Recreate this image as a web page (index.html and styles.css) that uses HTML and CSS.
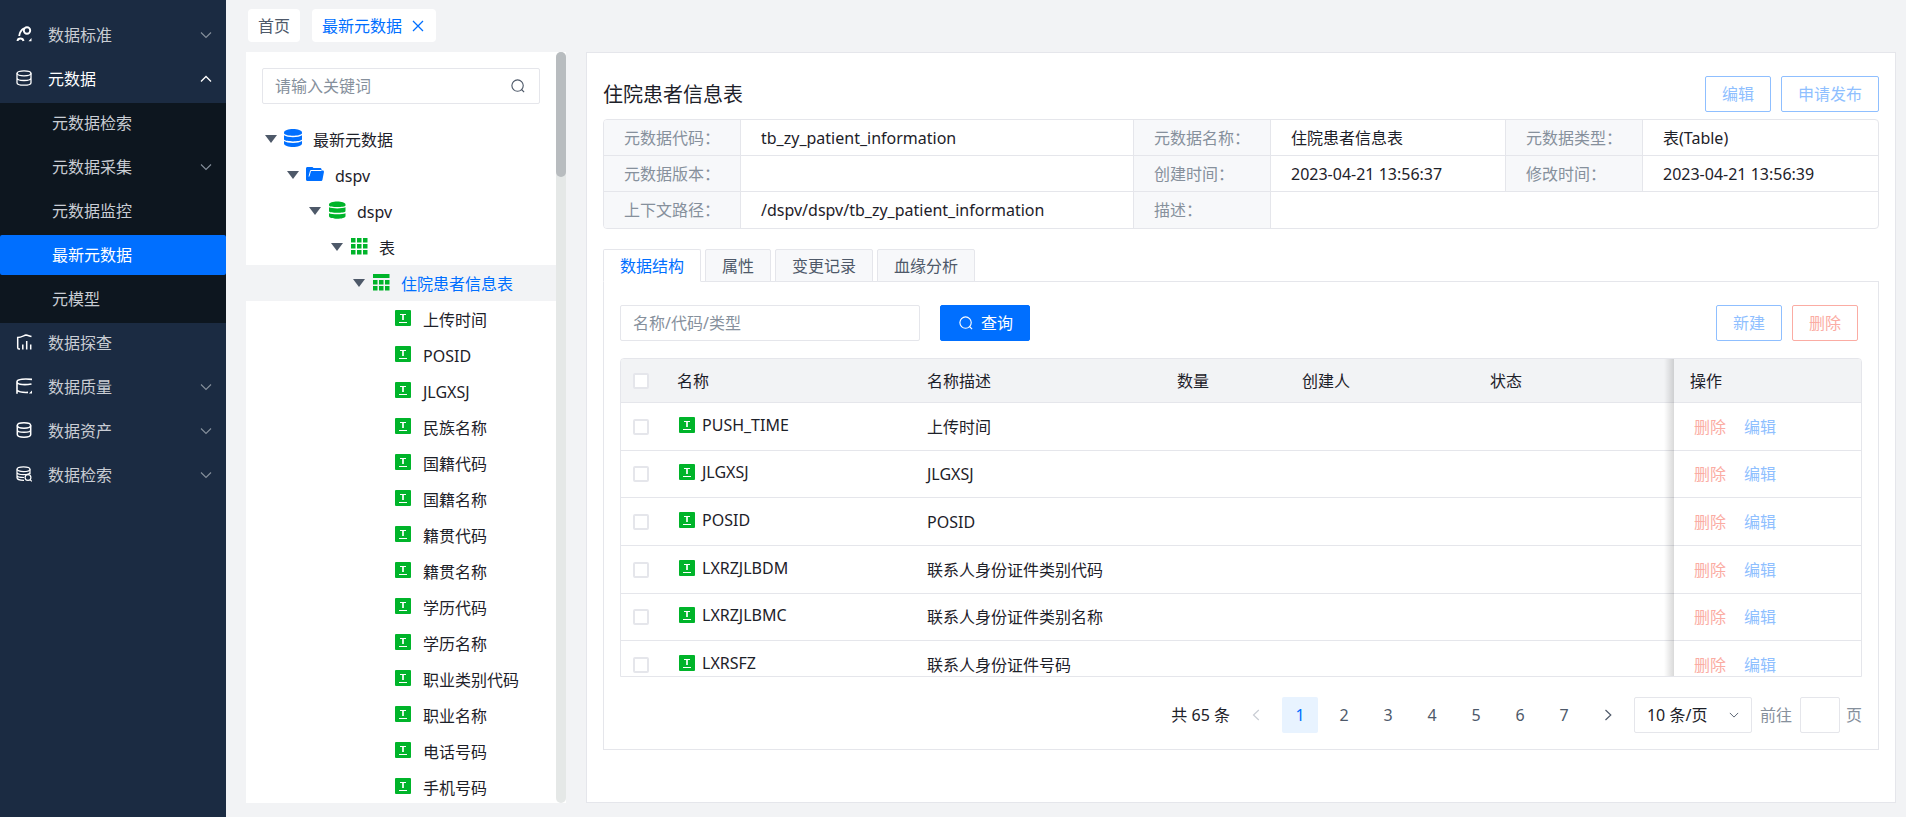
FILE: index.html
```html
<!DOCTYPE html>
<html lang="zh-CN">
<head>
<meta charset="utf-8">
<title>最新元数据</title>
<link rel="stylesheet" href="styles.css">
</head>
<body>
<svg class="sprite" aria-hidden="true">
  <symbol id="i-down" viewBox="0 0 12 12"><path d="M1 3.5l5 5 5-5" fill="none" stroke="currentColor" stroke-width="1.1"/></symbol>
  <symbol id="i-up" viewBox="0 0 12 12"><path d="M1 8.5l5-5 5 5" fill="none" stroke="currentColor" stroke-width="1.3"/></symbol>
  <symbol id="i-left" viewBox="0 0 12 12"><path d="M8.8 1L3.5 6l5.300 5" fill="none" stroke="currentColor" stroke-width="1.200"/></symbol>
  <symbol id="i-right" viewBox="0 0 12 12"><path d="M3.500 1l5.300 5-5.300 5" fill="none" stroke="currentColor" stroke-width="1.200"/></symbol>
  <symbol id="i-close" viewBox="0 0 12 12"><path d="M1 1l10 10M11 1L1 11" fill="none" stroke="currentColor" stroke-width="1.300"/></symbol>
  <symbol id="i-search" viewBox="0 0 16 16"><circle cx="7.500" cy="7.500" r="6.500" fill="none" stroke="currentColor" stroke-width="1.300"/><path d="M12 12l3 3" stroke="currentColor" stroke-width="1.300"/></symbol>
  <symbol id="i-caret" viewBox="0 0 12 8"><path d="M0 0h12L6 8z" fill="currentColor"/></symbol>
  <symbol id="i-standard" viewBox="0 0 16 16"><g fill="none" stroke="currentColor" stroke-width="1.900"><circle cx="11" cy="4.500" r="3.200"/><path d="M8 2.200C5 4 3.600 6.500 3.200 10"/><path d="M1.500 15c.3-3.400 5.500-3.400 6 0"/></g><path d="M15.500 12v3.200h-3z" fill="currentColor"/></symbol>
  <symbol id="i-db" viewBox="0 0 16 16"><g fill="none" stroke="currentColor" stroke-width="1.300"><ellipse cx="8" cy="3.300" rx="7" ry="2.500"/><path d="M1 3.300v9.400c0 1.400 3.100 2.500 7 2.500s7-1.100 7-2.500V3.300M1 8c0 1.400 3.100 2.500 7 2.500S15 9.400 15 8"/></g></symbol>
  <symbol id="i-explore" viewBox="0 0 16 16"><g fill="none" stroke="currentColor" stroke-width="1.500"><path d="M4 15H3C2 15 1.700 14.500 1.700 13.500V3.500C5 3.500 7.500 1.800 10 1c2 .4 3.500 1.200 5.500 1.600"/><path d="M6.800 15.500v-5M10.700 15.500V7M14.700 15.500v-5"/></g></symbol>
  <symbol id="i-quality" viewBox="0 0 16 16"><g fill="none" stroke="currentColor" stroke-width="1.600"><path d="M16 1.400C9 .6 1.200 1 1 3.600V15.800M1 4.200c1 2.600 8 3 14.500 1.800M1 12.200c1.500 1.600 6 2.400 11 2.200"/></g><path d="M16 12.500v3h-3z" fill="currentColor"/></symbol>
  <symbol id="i-asset" viewBox="0 0 16 16"><g fill="none" stroke="currentColor" stroke-width="1.500"><ellipse cx="8" cy="3.500" rx="6.700" ry="2.700"/><path d="M1.300 3.500v9c0 1.500 2.900 2.700 6.700 2.700s6.700-1.200 6.700-2.700v-9M1.300 8c0 1.300 2.900 2.300 6.700 2.300s6.700-1 6.700-2.300"/></g></symbol>
  <symbol id="i-retrieve" viewBox="0 0 16 16"><g fill="none" stroke="currentColor" stroke-width="1.200"><ellipse cx="7.500" cy="3.200" rx="6.500" ry="2.400"/><path d="M1 3.200v8.600c0 1.300 3 2.600 7 2.600M14 3.200v5M1 6.200c0 1.300 2.900 2.400 6.500 2.400S14 7.500 14 6.200M1 9.200c0 1.200 3 2.300 7 2.300"/><circle cx="12" cy="11.500" r="2.900"/><path d="M14 13.600l1.800 1.800"/></g></symbol>
  <symbol id="i-store" viewBox="0 0 18 18"><path d="M0 3.800C0-1.200 18-1.200 18 3.800v.8c-2 3-16 3-18 0z" fill="currentColor"/><path d="M0 6.200c3 2.600 15 2.600 18 0v4.300c-2 2.500-16 2.500-18 0zM0 12c3 2.600 15 2.600 18 0v2.500c0 4.600-18 4.600-18 0z" fill="currentColor"/></symbol>
  <symbol id="i-folder" viewBox="0 0 18 18"><path d="M1.500 2H6.500l1 1H14c1 0 1.600.6 1.600 1.500V5.500h1c1 0 1.500.7 1.300 1.700l-1.400 7.300c-.2 1-.8 1.500-1.700 1.500H1.500C.6 16 0 15.400 0 14.500v-11C0 2.600.6 2 1.500 2z" fill="currentColor"/><path d="M3 11.500l1.600-6H15.500" fill="none" stroke="#fff" stroke-width="1"/></symbol>
  <symbol id="i-schema" viewBox="0 0 18 18"><path d="M1 3.500C1-.4 17.500-.4 17.500 3.500v1C17.500 6.500 1 6.500 1 4.500zM1 6.300c3 1.500 13.500 1.500 16.500 0v4c0 2-16.500 2-16.500 0zM1 12.200c3 1.500 13.500 1.500 16.500 0V15c0 3.700-16.500 3.700-16.500 0z" fill="currentColor"/></symbol>
  <symbol id="i-grid" viewBox="0 0 18 18"><path d="M1 1h4.500v4.500H1zM7 1h4.500v4.500H7zM13 1h4.500v4.500H13zM1 7h4.500v4.500H1zM7 7h4.500v4.500H7zM13 7h4.500v4.500H13zM1 13h4.500v4.500H1zM7 13h4.500v4.500H7zM13 13h4.500v4.500H13z" fill="currentColor"/></symbol>
  <symbol id="i-table" viewBox="0 0 18 18"><path d="M1 1h16.500v4H1zM1 7h4.500v4.500H1zM7 7h4.500v4.500H7zM13 7h4.500v4.500H13zM1 13h4.500v4.500H1zM7 13h4.500v4.500H7zM13 13h4.500v4.500H13z" fill="currentColor"/></symbol>
  <symbol id="i-field" viewBox="0 0 18 18"><rect x="1" y="1" width="16" height="16" rx="1" fill="currentColor"/><path d="M6 5.500h6M5 13.500h8" stroke="#fff" stroke-width="1.200"/><path d="M9 5v6" stroke="#fff" stroke-width="1.700"/></symbol>
</svg>

<div class="app">
  <nav class="sidebar">
    <a class="menu-item" href="#"><svg class="menu-icon"><use href="#i-standard"/></svg><span class="menu-label">数据标准</span><svg class="chevron"><use href="#i-down"/></svg></a>
    <a class="menu-item open" href="#"><svg class="menu-icon"><use href="#i-db"/></svg><span class="menu-label">元数据</span><svg class="chevron"><use href="#i-up"/></svg></a>
    <div class="submenu">
      <a class="menu-item" href="#"><span class="menu-label">元数据检索</span></a>
      <a class="menu-item" href="#"><span class="menu-label">元数据采集</span><svg class="chevron"><use href="#i-down"/></svg></a>
      <a class="menu-item" href="#"><span class="menu-label">元数据监控</span></a>
      <a class="menu-item current" href="#"><span class="menu-label">最新元数据</span></a>
      <a class="menu-item" href="#"><span class="menu-label">元模型</span></a>
    </div>
    <a class="menu-item" href="#"><svg class="menu-icon"><use href="#i-explore"/></svg><span class="menu-label">数据探查</span></a>
    <a class="menu-item" href="#"><svg class="menu-icon"><use href="#i-quality"/></svg><span class="menu-label">数据质量</span><svg class="chevron"><use href="#i-down"/></svg></a>
    <a class="menu-item" href="#"><svg class="menu-icon"><use href="#i-asset"/></svg><span class="menu-label">数据资产</span><svg class="chevron"><use href="#i-down"/></svg></a>
    <a class="menu-item" href="#"><svg class="menu-icon"><use href="#i-retrieve"/></svg><span class="menu-label">数据检索</span><svg class="chevron"><use href="#i-down"/></svg></a>
  </nav>

  <div class="main">
    <div class="page-tabs">
      <a class="page-tab" href="#">首页</a>
      <div class="page-tab active"><a class="page-link" href="#">最新元数据</a><button class="close" type="button" aria-label="关闭"><svg><use href="#i-close"/></svg></button></div>
    </div>

    <div class="panels">
      <aside class="tree-panel">
        <div class="tree-body">
          <div class="tree-search"><input type="text" placeholder="请输入关键词" aria-label="请输入关键词"><svg><use href="#i-search"/></svg></div>
          <ul class="tree">
            <li class="node"><svg class="caret"><use href="#i-caret"/></svg><svg class="node-icon blue"><use href="#i-store"/></svg>最新元数据</li>
            <li class="node l1"><svg class="caret"><use href="#i-caret"/></svg><svg class="node-icon blue"><use href="#i-folder"/></svg>dspv</li>
            <li class="node l2"><svg class="caret"><use href="#i-caret"/></svg><svg class="node-icon"><use href="#i-schema"/></svg>dspv</li>
            <li class="node l3"><svg class="caret"><use href="#i-caret"/></svg><svg class="node-icon"><use href="#i-grid"/></svg>表</li>
            <li class="node l4 selected"><svg class="caret"><use href="#i-caret"/></svg><svg class="node-icon"><use href="#i-table"/></svg>住院患者信息表</li>
            <li class="node leaf"><svg class="node-icon"><use href="#i-field"/></svg>上传时间</li>
            <li class="node leaf"><svg class="node-icon"><use href="#i-field"/></svg>POSID</li>
            <li class="node leaf"><svg class="node-icon"><use href="#i-field"/></svg>JLGXSJ</li>
            <li class="node leaf"><svg class="node-icon"><use href="#i-field"/></svg>民族名称</li>
            <li class="node leaf"><svg class="node-icon"><use href="#i-field"/></svg>国籍代码</li>
            <li class="node leaf"><svg class="node-icon"><use href="#i-field"/></svg>国籍名称</li>
            <li class="node leaf"><svg class="node-icon"><use href="#i-field"/></svg>籍贯代码</li>
            <li class="node leaf"><svg class="node-icon"><use href="#i-field"/></svg>籍贯名称</li>
            <li class="node leaf"><svg class="node-icon"><use href="#i-field"/></svg>学历代码</li>
            <li class="node leaf"><svg class="node-icon"><use href="#i-field"/></svg>学历名称</li>
            <li class="node leaf"><svg class="node-icon"><use href="#i-field"/></svg>职业类别代码</li>
            <li class="node leaf"><svg class="node-icon"><use href="#i-field"/></svg>职业名称</li>
            <li class="node leaf"><svg class="node-icon"><use href="#i-field"/></svg>电话号码</li>
            <li class="node leaf"><svg class="node-icon"><use href="#i-field"/></svg>手机号码</li>
          </ul>
        </div>
        <div class="scroll-track"><div class="scroll-thumb"></div></div>
      </aside>

      <main class="detail">
        <header class="detail-head">
          <h1>住院患者信息表</h1>
          <button class="btn outline" type="button">编辑</button>
          <button class="btn outline" type="button">申请发布</button>
        </header>

        <table class="info">
          <colgroup><col class="w-label"><col class="w-wide"><col class="w-label"><col class="w-value"><col class="w-label"><col class="w-value"></colgroup>
          <tbody>
            <tr><th>元数据代码：</th><td>tb_zy_patient_information</td><th>元数据名称：</th><td>住院患者信息表</td><th>元数据类型：</th><td>表(Table)</td></tr>
            <tr><th>元数据版本：</th><td></td><th>创建时间：</th><td>2023-04-21 13:56:37</td><th>修改时间：</th><td>2023-04-21 13:56:39</td></tr>
            <tr><th>上下文路径：</th><td>/dspv/dspv/tb_zy_patient_information</td><th>描述：</th><td colspan="3"></td></tr>
          </tbody>
        </table>

        <div class="tabs" role="tablist">
          <button class="tab active" type="button" role="tab" aria-selected="true">数据结构</button>
          <button class="tab" type="button" role="tab">属性</button>
          <button class="tab" type="button" role="tab">变更记录</button>
          <button class="tab" type="button" role="tab">血缘分析</button>
        </div>

        <section class="tab-content">
          <div class="toolbar">
            <input class="keyword" type="text" placeholder="名称/代码/类型" aria-label="名称/代码/类型">
            <button class="btn primary" type="button"><svg><use href="#i-search"/></svg>查询</button>
            <span class="spacer"></span>
            <button class="btn outline" type="button">新建</button>
            <button class="btn danger" type="button">删除</button>
          </div>

          <div class="grid-wrap">
            <table class="grid">
              <colgroup><col class="c-check"><col class="c-name"><col class="c-name"><col class="c-count"><col class="c-user"><col class="c-state"><col class="c-user"></colgroup>
              <thead>
                <tr><th class="check"><input type="checkbox" aria-label="全选"></th><th>名称</th><th>名称描述</th><th>数量</th><th>创建人</th><th>状态</th><th class="ops">操作</th></tr>
              </thead>
              <tbody>
                <tr><td class="check"><input type="checkbox" aria-label="PUSH_TIME"></td><td><span class="field"><svg><use href="#i-field"/></svg>PUSH_TIME</span></td><td>上传时间</td><td></td><td></td><td></td><td class="ops"><a class="del" href="#">删除</a><a class="edit" href="#">编辑</a></td></tr>
                <tr><td class="check"><input type="checkbox" aria-label="JLGXSJ"></td><td><span class="field"><svg><use href="#i-field"/></svg>JLGXSJ</span></td><td>JLGXSJ</td><td></td><td></td><td></td><td class="ops"><a class="del" href="#">删除</a><a class="edit" href="#">编辑</a></td></tr>
                <tr><td class="check"><input type="checkbox" aria-label="POSID"></td><td><span class="field"><svg><use href="#i-field"/></svg>POSID</span></td><td>POSID</td><td></td><td></td><td></td><td class="ops"><a class="del" href="#">删除</a><a class="edit" href="#">编辑</a></td></tr>
                <tr><td class="check"><input type="checkbox" aria-label="LXRZJLBDM"></td><td><span class="field"><svg><use href="#i-field"/></svg>LXRZJLBDM</span></td><td>联系人身份证件类别代码</td><td></td><td></td><td></td><td class="ops"><a class="del" href="#">删除</a><a class="edit" href="#">编辑</a></td></tr>
                <tr><td class="check"><input type="checkbox" aria-label="LXRZJLBMC"></td><td><span class="field"><svg><use href="#i-field"/></svg>LXRZJLBMC</span></td><td>联系人身份证件类别名称</td><td></td><td></td><td></td><td class="ops"><a class="del" href="#">删除</a><a class="edit" href="#">编辑</a></td></tr>
                <tr><td class="check"><input type="checkbox" aria-label="LXRSFZ"></td><td><span class="field"><svg><use href="#i-field"/></svg>LXRSFZ</span></td><td>联系人身份证件号码</td><td></td><td></td><td></td><td class="ops"><a class="del" href="#">删除</a><a class="edit" href="#">编辑</a></td></tr>
              </tbody>
            </table>
          </div>

          <div class="pager">
            <span class="total">共 65 条</span>
            <button class="page off" type="button" aria-label="上一页"><svg><use href="#i-left"/></svg></button>
            <button class="page active" type="button">1</button>
            <button class="page" type="button">2</button>
            <button class="page" type="button">3</button>
            <button class="page" type="button">4</button>
            <button class="page" type="button">5</button>
            <button class="page" type="button">6</button>
            <button class="page" type="button">7</button>
            <button class="page" type="button" aria-label="下一页"><svg><use href="#i-right"/></svg></button>
            <span class="size"><select aria-label="每页条数"><option>10 条/页</option></select><svg><use href="#i-down"/></svg></span>
            <label class="jump">前往<input type="text">页</label>
          </div>
        </section>
      </main>
    </div>
  </div>
</div>
</body>
</html>
```
FILE: styles.css
```css
* { box-sizing: border-box; }

body {
  margin: 0;
  font: 16px/24px "Noto Sans", "Noto Sans CJK SC", sans-serif;
  color: #1d2129;
  background: #f2f3f5;
}

a { color: inherit; text-decoration: none; }
button, input, select { font: inherit; color: inherit; margin: 0; }
input::placeholder { color: #86909c; opacity: 1; }
.sprite { display: none; }

.app { display: flex; height: 100vh; overflow: hidden; }

/* Sidebar */
.sidebar {
  flex: none;
  width: 226px;
  padding-top: 15px;
  background: #1b2b42;
  color: #c9cdd4;
}
.menu-item {
  display: flex;
  align-items: center;
  height: 40px;
  margin-bottom: 4px;
  padding: 0 14px 0 16px;
}
.menu-icon { width: 16px; height: 16px; margin: 0 16px 2px 0; color: #fff; }
.menu-label { flex: 1; }
.chevron { width: 12px; height: 12px; color: #86909c; }
.menu-item.open, .open .chevron { color: #fff; }
.submenu { background: #0d161f; display: flow-root; }
.submenu .menu-item { padding-left: 52px; }
.menu-item.current { background: #006fff; color: #fff; border-radius: 2px; }

/* Page tabs */
.main {
  flex: 1;
  min-width: 0;
  display: flex;
  flex-direction: column;
  gap: 10px;
  padding: 9px 10px 14px 20px;
}
.page-tabs { display: flex; gap: 12px; padding-left: 2px; }
.page-tab {
  display: flex;
  align-items: center;
  height: 33px;
  padding: 0 10px;
  border-radius: 4px;
  background: #fff;
  color: #4e5969;
}
.page-tab.active { color: #006fff; }
.close {
  display: flex;
  margin-left: 10px;
  padding: 0 2px 0 0;
  border: 0;
  background: none;
}
.close svg { width: 12px; height: 12px; }

.panels { flex: 1; min-height: 0; display: flex; gap: 20px; }

/* Tree */
.tree-panel { flex: none; width: 320px; display: flex; background: #fff; }
.tree-body { flex: 1; overflow: hidden; padding-top: 16px; }
.tree-search {
  display: flex;
  align-items: center;
  height: 36px;
  margin: 0 16px;
  padding: 0 14px 0 12px;
  border: 1px solid #e5e6eb;
  border-radius: 2px;
}
.tree-search input { flex: 1; min-width: 0; padding: 0; border: 0; outline: 0; background: none; }
.tree-search svg { width: 14px; height: 14px; color: #4e5969; }
.tree { list-style: none; margin: 17px 0 0; padding: 0; }
.node { display: flex; align-items: center; height: 36px; padding: 2px 0 0 19px; white-space: nowrap; }
.l1 { padding-left: 41px; }
.l2 { padding-left: 63px; }
.l3 { padding-left: 85px; }
.l4 { padding-left: 107px; }
.leaf { padding-left: 148px; }
.selected { background: #f2f3f5; color: #006fff; }
.caret { width: 12px; height: 8px; margin: 0 7px 2px 0; color: #4e5969; }
.node-icon { width: 18px; height: 18px; margin: 0 11px 4px 0; color: #00b42a; }
.node-icon.blue { color: #006fff; }
.scroll-track { width: 10px; border-radius: 5px; background: #e5e8e7; }
.scroll-thumb { height: 125px; border-radius: 5px; background: #b8bcbf; }

/* Detail */
.detail {
  flex: 1;
  min-width: 0;
  padding: 23px 16px 0;
  border: 1px solid #e5e6eb;
  background: #fff;
}
.detail-head { display: flex; align-items: center; gap: 10px; margin-bottom: 7px; }
h1 { flex: 1; margin: 0; padding-top: 2px; font-size: 20px; font-weight: 400; line-height: 34px; }
.btn {
  display: flex;
  align-items: center;
  height: 36px;
  padding: 0 16px;
  border: 1px solid;
  border-radius: 2px;
  background: #fff;
}
.outline { color: #8fbfff; }
.danger { color: #fbaca3; }
.primary { gap: 8px; background: #006fff; border-color: #006fff; color: #fff; }
.primary svg { width: 14px; height: 14px; margin-left: 2px; }

.info {
  width: 100%;
  table-layout: fixed;
  border-collapse: separate;
  border-spacing: 0;
  border: 1px solid #e5e6eb;
  border-radius: 4px;
  overflow: hidden;
}
.w-label { width: 137px; }
.w-wide { width: 393px; }
.w-value { width: 235px; }
.info th, .info td {
  height: 36px;
  padding: 0 20px;
  border-right: 1px solid #e5e6eb;
  border-bottom: 1px solid #e5e6eb;
  font-weight: 400;
  text-align: left;
  white-space: nowrap;
}
.info th { background: #f7f8fa; color: #86909c; }
.info tr > :last-child { border-right: 0; }
.info tr:last-child > * { border-bottom: 0; }

.tabs { display: flex; gap: 4px; margin-top: 20px; }
.tab {
  height: 33px;
  padding: 0 16px;
  border: 1px solid #e5e6eb;
  border-radius: 2px 2px 0 0;
  background: #f7f8fa;
  color: #4e5969;
}
.tab.active { border-bottom-color: #fff; background: #fff; color: #006fff; z-index: 1; }
.tab-content { margin-top: -1px; padding: 23px 16px 16px; border: 1px solid #e5e6eb; }

.toolbar { display: flex; align-items: center; gap: 10px; padding-right: 4px; }
.keyword { width: 300px; height: 36px; margin-right: 10px; padding: 0 12px; border: 1px solid #e5e6eb; border-radius: 2px; }
.spacer { flex: 1; }

/* Data grid */
.grid-wrap {
  height: calc(100vh - 498px);
  min-height: 200px;
  margin-top: 17px;
  overflow: hidden;
  border: 1px solid #e5e6eb;
  border-radius: 4px 4px 0 0;
}
.grid { width: 100%; table-layout: fixed; border-collapse: separate; border-spacing: 0; }
.c-check { width: 40px; }
.c-name { width: 250px; }
.c-count { width: 125px; }
.c-user { width: 188px; }
.c-state { width: 200px; }
.grid th, .grid td {
  height: 48px;
  padding: 0 16px;
  border-bottom: 1px solid #e5e6eb;
  font-weight: 400;
  text-align: left;
}
.grid th { height: 44px; background: #f2f3f5; }
.grid tbody tr:nth-child(3n+2) td { height: 47px; }
.grid .check { padding: 0 12px; }
.check input {
  display: block;
  width: 16px;
  height: 16px;
  appearance: none;
  border: 2px solid #e5e6eb;
  border-radius: 2px;
  background: #fff;
}
.field { display: flex; align-items: center; gap: 6px; padding-bottom: 4px; }
.field svg { width: 18px; height: 18px; margin-left: 1px; color: #00b42a; }
.grid .ops { position: relative; background-clip: padding-box; }
.ops::before {
  content: "";
  position: absolute;
  top: 0;
  bottom: -1px;
  left: -10px;
  width: 10px;
  background: linear-gradient(to left, rgba(0, 0, 0, 0.15), rgba(0, 0, 0, 0));
}
.grid td.ops { padding-left: 20px; }
.ops a + a { margin-left: 18px; }
.del { color: #fbaca3; }
.edit { color: #8fbfff; }

/* Pagination */
.pager { display: flex; justify-content: flex-end; align-items: center; gap: 8px; margin-top: 20px; }
.page {
  display: flex;
  align-items: center;
  justify-content: center;
  width: 36px;
  height: 36px;
  padding: 0;
  border: 0;
  border-radius: 2px;
  background: none;
  color: #4e5969;
}
.page svg { width: 12px; height: 12px; }
.page.active { background: #e8f3ff; color: #006fff; }
.page.off { color: #c9cdd4; }
.size { position: relative; }
.size select {
  display: block;
  width: 118px;
  height: 36px;
  padding: 0 12px;
  appearance: none;
  border: 1px solid #e5e6eb;
  border-radius: 2px;
  background: #fff;
}
.size svg { position: absolute; right: 13px; top: 13px; width: 10px; height: 10px; color: #4e5969; pointer-events: none; }
.jump { display: flex; align-items: center; color: #86909c; }
.jump input { width: 40px; height: 36px; margin: 0 6px 0 8px; border: 1px solid #e5e6eb; border-radius: 2px; }
```
